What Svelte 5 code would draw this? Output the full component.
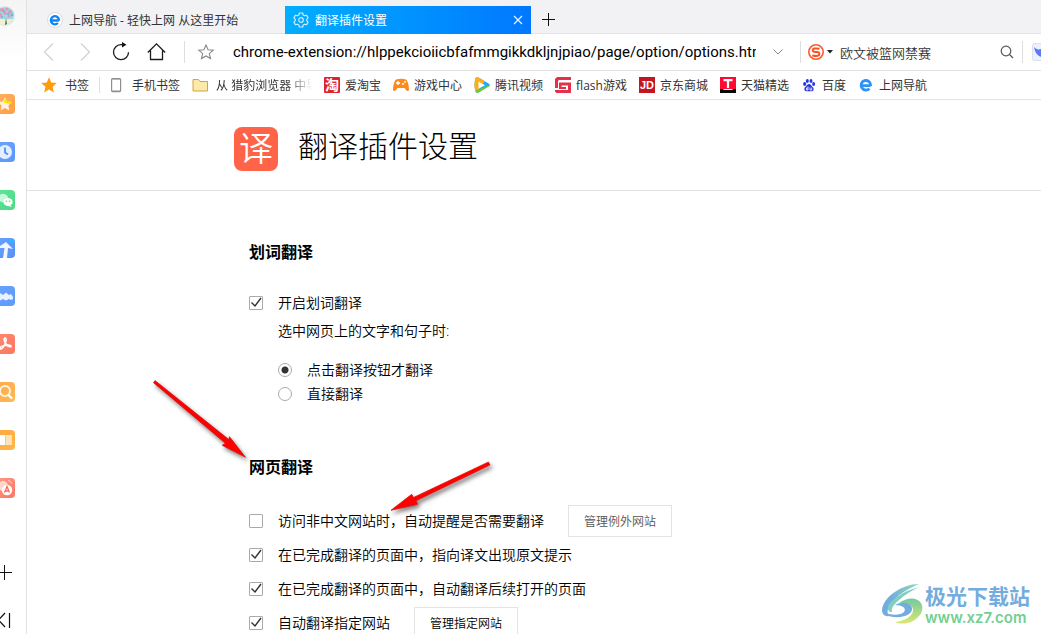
<script>
  const apps = [
    { id: 'favorites', label: '收藏', from: '#ffb066', to: '#ff9e40' },
    { id: 'history', label: '历史', from: '#6ba4ff', to: '#5c98fa' },
    { id: 'wechat', label: '微信', from: '#5ce596', to: '#4cdb86' },
    { id: 'travel', label: '出行', from: '#6aa2ff', to: '#5592f5' },
    { id: 'waves', label: '云盘', from: '#6aa2ff', to: '#5c9afc' },
    { id: 'pdf', label: 'PDF', from: '#ff8770', to: '#fb7763' },
    { id: 'search', label: '搜索', from: '#ffa94f', to: '#ffb94d' },
    { id: 'book', label: '阅读', from: '#ffa640', to: '#ffb748' },
    { id: 'translate', label: '翻译', from: '#ff9a85', to: '#fb7766' }
  ];

  const bookmarks = [
    { icon: 'tao', text: '爱淘宝' },
    { icon: 'game', text: '游戏中心' },
    { icon: 'video', text: '腾讯视频' },
    { icon: 'flash', text: 'flash游戏' },
    { icon: 'jd', text: '京东商城' },
    { icon: 'tmall', text: '天猫精选' },
    { icon: 'baidu', text: '百度' },
    { icon: 'edge', text: '上网导航' }
  ];

  let url = $state('chrome-extension://hlppekcioiicbfafmmgikkdkljnjpiao/page/option/options.html');
  let query = $state('欧文被篮网禁赛');
  let wordTranslate = $state(true);
  let mode = $state('click');

  let pageOptions = $state([
    { text: '访问非中文网站时，自动提醒是否需要翻译', checked: false, button: '管理例外网站', muted: true },
    { text: '在已完成翻译的页面中，指向译文出现原文提示', checked: true },
    { text: '在已完成翻译的页面中，自动翻译后续打开的页面', checked: true },
    { text: '自动翻译指定网站', checked: true, button: '管理指定网站' }
  ]);
</script>

{#snippet edge()}
  <path d="M3.4 8.6h9.2M12.7 9V8.2a4.8 4.8 0 1 0-1.3 3.4" fill="none" stroke="currentColor" stroke-width="2.8" />
{/snippet}

<div class="shell">
  <aside class="side">
    <button class="avatar" aria-label="账号">
      <svg viewBox="0 0 20 20" width="20" height="20">
        <circle cx="10" cy="10" r="10" fill="#dfe9dc" />
        <path d="M1 7a10 10 0 0 1 18 0l-1 6H2z" fill="#9fd6e6" />
        <g fill="#e596b5">
          <circle cx="7" cy="4" r="2" /><circle cx="12" cy="3" r="1.6" /><circle cx="15" cy="6" r="2" />
          <circle cx="10" cy="7" r="1.8" /><circle cx="5" cy="9" r="2" /><circle cx="14" cy="10" r="1.5" />
        </g>
        <g fill="#62b9d4">
          <circle cx="9" cy="5" r="1" /><circle cx="13" cy="8" r="1" /><circle cx="17" cy="9" r="1.2" /><circle cx="7" cy="11" r="1" />
        </g>
        <path d="M2 14c4-2 7 1 15-1a10 10 0 0 1-14 4z" fill="#f3f1cf" />
        <path d="M11 12l1 6-2 1z" fill="#4c6b56" />
      </svg>
    </button>
    <nav class="apps">
      {#each apps as app}
        <button class="app" aria-label={app.label} style="background: linear-gradient(135deg, {app.from}, {app.to})">
          <svg viewBox="0 0 20 20" width="20" height="20">
            {#if app.id === 'favorites'}
              <path d="M10 3l2.1 4.5 4.9.6-3.6 3.4.9 4.9L10 14l-4.3 2.4.9-4.9L3 8.1l4.9-.6z" fill="#fff3df" />
              <path d="M10 3l2.1 4.5 4.9.6-2 1.8-6-1.2z" fill="#ffe100" />
            {:else if app.id === 'history'}
              <circle cx="10" cy="10" r="7" fill="#e3eeff" />
              <path d="M10 5.5v5l3 2" fill="none" stroke="#4f8df5" stroke-width="1.8" />
            {:else if app.id === 'wechat'}
              <ellipse cx="8" cy="8" rx="5" ry="4.2" fill="#c9f7da" />
              <ellipse cx="13" cy="12" rx="4.6" ry="4" fill="#fff" />
              <path d="M15 15l2 2-4-1z" fill="#fff" />
              <circle cx="11.4" cy="11.2" r=".8" fill="#4cdb86" /><circle cx="14.6" cy="11.2" r=".8" fill="#4cdb86" />
            {:else if app.id === 'travel'}
              <path d="M13 3.500l2-2 4 2v1.500z" fill="#00d0ff" />
              <path d="M2 10l9-6 7 7-5-1-1 10H8l1.500-10z" fill="#f1f6ff" />
            {:else if app.id === 'waves'}
              <path d="M2 13V9l3-2 3 2 3-2.500 3 2.500 2-1 2 3v2l-2 1-2-1-3 1.500-3-1.500-3 1.500z" fill="#e9f2ff" />
            {:else if app.id === 'pdf'}
              <path d="M10 4c2 0 1 4-1 8-1.500 3-4 4-4 2s9-4 11-2c1 1.500-3 1-5-2S8.500 4 10 4z" fill="none" stroke="#fff" stroke-width="1.600" />
            {:else if app.id === 'search'}
              <circle cx="10" cy="9" r="5" fill="none" stroke="#fff4e2" stroke-width="2" />
              <path d="M13.500 13l3 3" stroke="#fff" stroke-width="2.200" stroke-linecap="round" />
            {:else if app.id === 'book'}
              <path d="M3 5h7v10H3z" fill="#fff" /><path d="M10.500 5H17v10h-6.500z" fill="#ffe2b8" />
            {:else}
              <circle cx="8" cy="8" r="5" fill="#ffd6cc" />
              <circle cx="12" cy="12" r="5.200" fill="#fff" />
              <path d="M9.500 14.500l2.500-6 2.500 6M10.300 13h3.400" fill="none" stroke="#fb6c58" stroke-width="1.300" />
              <path d="M13 2.500q3 .5 4 3M2 14q.5 3 3 4" fill="none" stroke="#ffd6cc" />
            {/if}
          </svg>
        </button>
      {/each}
    </nav>
    <button class="tool" aria-label="添加">
      <svg viewBox="0 0 16 16" width="16" height="16"><path d="M8.500 1v15M1 8.500h15" stroke="#111" fill="none" /></svg>
    </button>
    <button class="tool" aria-label="收起">
      <svg viewBox="0 0 16 16" width="16" height="16"><path d="M9 1L2.500 8 9 15M13.500 1v15" stroke="#111" stroke-width="1.200" fill="none" /></svg>
    </button>
  </aside>

  <div class="window">
    <div class="tabs">
      <div class="tab">
        <svg class="disc" viewBox="0 0 16 16" width="16" height="16">
          <circle cx="8" cy="8" r="7.500" fill="#fff" stroke="#d8dbe0" />
          <g color="#0f86f5" transform="translate(1.200 1.200) scale(.85)">{@render edge()}</g>
        </svg>
        <span>上网导航 - 轻快上网 从这里开始</span>
      </div>
      <div class="tab active">
        <svg viewBox="0 0 16 16" width="16" height="16" fill="none" stroke="#cfeaff" stroke-width="1.200" stroke-linejoin="round">
          <path d="M6.300 1h3.400l.5 2 1.400.8 2-.6 1.500 2.700L13.700 7.300v1.400l1.400 1.400-1.500 2.700-2-.6-1.400.8-.5 2H6.300l-.5-2-1.400-.8-2 .6L.9 10.100l1.400-1.400V7.300L.9 5.900l1.500-2.700 2 .6L5.800 3z" />
          <circle cx="8" cy="8" r="2.300" />
        </svg>
        <span class="grow">翻译插件设置</span>
        <button class="close" aria-label="关闭标签页">
          <svg viewBox="0 0 10 10" width="10" height="10"><path d="M1 1l8 8M9 1L1 9" stroke="#e6f4ff" stroke-width="1.200" /></svg>
        </button>
      </div>
      <button class="newtab" aria-label="新标签页">
        <svg viewBox="0 0 14 14" width="14" height="14"><path d="M6.500 0v13M0 6.500h13" stroke="#111" /></svg>
      </button>
    </div>

    <div class="toolbar">
      <button class="nav" aria-label="后退"><svg viewBox="0 0 20 20" width="20" height="20"><path d="M14 1.500L5.500 10l8.500 8.500" fill="none" stroke="#d0d0d0" stroke-width="1.200" /></svg></button>
      <button class="nav" aria-label="前进"><svg viewBox="0 0 20 20" width="20" height="20"><path d="M6 1.500l8.500 8.500L6 18.500" fill="none" stroke="#d0d0d0" stroke-width="1.200" /></svg></button>
      <button class="nav" aria-label="刷新"><svg viewBox="0 0 20 20" width="20" height="20"><path d="M12 2.700H9.800a7.500 7.500 0 1 0 7.700 7.500" fill="none" stroke="#1c1c1c" stroke-width="1.300" /><path d="M11 0l4.500 2.700L11 5.400z" fill="#111" /></svg></button>
      <button class="nav" aria-label="主页"><svg viewBox="0 0 20 20" width="20" height="20"><path d="M.8 10.500L9.500 1.800l8.700 8.700M3.500 8.500v9h12v-9" fill="none" stroke="#1c1c1c" stroke-width="1.300" /></svg></button>
      <i class="bar first"></i>
      <button class="fav" aria-label="收藏"><svg viewBox="0 0 20 20" width="20" height="20"><path d="M10 3l2.100 4.700 5.100.5-3.900 3.400 1.200 5L10 14l-4.500 2.600 1.200-5-3.900-3.400 5.100-.5z" fill="none" stroke="#8a8a8a" stroke-width="1.100" /></svg></button>
      <input class="url" aria-label="地址" bind:value={url} />
      <button class="drop" aria-label="展开地址"><svg viewBox="0 0 12 12" width="12" height="12"><path d="M1.500 3.500L6 8l4.500-4.500" fill="none" stroke="#888" /></svg></button>
      <i class="bar"></i>
      <div class="search">
        <button class="engine" aria-label="搜索引擎">
          <svg viewBox="0 0 16 16" width="16" height="16">
            <circle cx="8" cy="8" r="7.200" fill="#fff" stroke="#fb5a2c" stroke-width="1.600" />
            <path d="M11.500 4.800Q4.800 3.600 4.800 6t3.400 2 3.200 2.200T4.300 11.400" fill="none" stroke="#fb5022" stroke-width="2" />
          </svg>
          <svg viewBox="0 0 6 4" width="6" height="4"><path d="M0 0h6L3 3.500z" fill="#222" /></svg>
        </button>
        <input class="query" aria-label="搜索" bind:value={query} />
        <button class="go" aria-label="开始搜索"><svg viewBox="0 0 14 14" width="14" height="14"><circle cx="6" cy="6" r="4.800" fill="none" stroke="#555" stroke-width="1.200" /><path d="M9.500 9.500L13 13" stroke="#555" stroke-width="1.200" /></svg></button>
      </div>
      <i class="bar"></i>
      <button class="ext" aria-label="扩展"><svg viewBox="0 0 18 18" width="18" height="18"><rect x=".5" y=".5" width="17" height="17" rx="2" fill="#eef0fd" stroke="#dcdff3" /><path d="M2 4c2 2 4 3 7 2l7 1-5 7c-5 0-8-4-9-10z" fill="#5a7bf0" /></svg></button>
    </div>

    <div class="bookmarks">
      <a class="mark wide" href="#bookmarks">
        <svg viewBox="0 0 16 16" width="16" height="16"><path d="M8 .3l2.200 5.200 5.600.5-4.200 3.800 1.200 5.600L8 12.500l-4.800 2.900 1.200-5.600L.2 6l5.600-.5z" fill="#ff9c0a" /></svg>书签
      </a>
      <i class="bar short"></i>
      <a class="mark wide" href="#mobile">
        <svg viewBox="0 0 16 16" width="16" height="16"><rect x="3.600" y="1.600" width="9" height="13" rx="1" fill="#fff" stroke="#8f8f8f" stroke-width="1.200" /><path d="M4 2h8M4 14h8" stroke="#8f8f8f" /></svg>手机书签
      </a>
      <a class="mark wide folder" href="#imported">
        <svg viewBox="0 0 16 16" width="16" height="16"><path d="M1 2.500h5.500L8 4.500h7.500v9.500H1z" fill="#ffe9a8" stroke="#cfa546" /></svg><span class="fade">从 猎豹浏览器 中导</span>
      </a>
      {#each bookmarks as mark}
        <a class="mark" href="#{mark.icon}">
          <svg viewBox="0 0 16 16" width="16" height="16">
            {#if mark.icon === 'tao'}
              <rect width="16" height="16" rx="1" fill="#dd2230" />
              <text class="zh" x="8" y="13" font-size="14" text-anchor="middle">淘</text>
            {:else if mark.icon === 'game'}
              <path d="M3 2.500Q8 .8 13 2.500c2 1.500 3 7 3 10-.3 2-2 2-3 .5L11.500 11h-7L3 13c-1 1.500-2.700 1.500-3-.5 0-3 1-8.500 3-10z" fill="#ff8a1c" />
              <path d="M5 4v4M3 6h4" stroke="#fff" stroke-width="1.300" /><circle cx="10" cy="7" r="1" fill="#fff" /><circle cx="12" cy="5" r="1" fill="#fff" />
            {:else if mark.icon === 'video'}
              <path d="M1.500 1Q3-.3 5 .7l10 6q1.500 1.300 0 2.600l-10 6q-2 1-3.300-.2Q-.5 8 1.500 1z" fill="#1eaaf5" />
              <path d="M1.500 1Q3-.3 5 .7l6 3.600L4 13 1.200 14Q-.5 8 1.500 1z" fill="#ffad18" />
              <path d="M2.500 13.500L15.500 8q0 .8-.5 1.300l-10 6q-2 1-3.300-.2z" fill="#79c91c" />
              <path d="M4.500 4.500l6.500 3.700-6.500 3.600z" fill="#fff" />
            {:else if mark.icon === 'flash'}
              <path d="M2 0h14v3H4L3 4v7H0V2zM4 5.500h12V16H1.500L0 14.500V13h13V8.500H6.500v1.500H11v2H4z" fill="#e5304c" />
            {:else if mark.icon === 'jd'}
              <rect width="16" height="16" fill="#c5161f" />
              <text class="latin" x="8" y="12" font-size="11" text-anchor="middle">JD</text>
            {:else if mark.icon === 'tmall'}
              <path d="M0 0h16v12H0z" fill="#ff0a35" /><path d="M0 12h3l1 1h8l1-1h3v4H0z" fill="#080808" />
              <path d="M3.500 3.200h9M8 3v8" stroke="#fff" stroke-width="2.200" />
            {:else if mark.icon === 'baidu'}
              <g fill="#2b37dc">
                <ellipse cx="3.700" cy="7" rx="1.600" ry="2" /><ellipse cx="6.300" cy="3.900" rx="1.500" ry="2" />
                <ellipse cx="10" cy="3.900" rx="1.500" ry="2" /><ellipse cx="12.600" cy="7" rx="1.500" ry="2" />
                <path d="M8 7c1.600 0 2.300 1.800 3.700 3 1.600 1.400 1.200 4-.9 4.200-1.900.2-3.700.2-5.600 0-2-.2-2.500-2.800-.9-4.200C5.700 8.800 6.400 7 8 7z" />
              </g>
              <path d="M7 9.500v3.500H5.500v-2H7M9 10.500V13h1.700v-2.500" fill="none" stroke="#fff" stroke-width=".8" />
            {:else}
              <g color="#2f92f7">{@render edge()}</g>
            {/if}
          </svg>{mark.text}
        </a>
      {/each}
    </div>

    <main class="page">
      <header class="head">
        <div class="inner">
          <span class="logo" aria-hidden="true">译</span>
          <h1>翻译插件设置</h1>
        </div>
      </header>

      <div class="content">
        <section>
          <h2>划词翻译</h2>
          <label class="option line"><input type="checkbox" bind:checked={wordTranslate} />开启划词翻译</label>
          <div class="nested">
            <p id="mode-label">选中网页上的文字和句子时:</p>
            <div class="modes" role="radiogroup" aria-labelledby="mode-label">
              <label class="option"><input type="radio" name="mode" value="click" bind:group={mode} />点击翻译按钮才翻译</label>
              <label class="option"><input type="radio" name="mode" value="direct" bind:group={mode} />直接翻译</label>
            </div>
          </div>
        </section>

        <section>
          <h2>网页翻译</h2>
          {#each pageOptions as option}
            <div class="row">
              <label class="option"><input type="checkbox" bind:checked={option.checked} />{option.text}</label>
              {#if option.button}
                <button class="manage" class:muted={option.muted}>{option.button}</button>
              {/if}
            </div>
          {/each}
        </section>
      </div>
    </main>
  </div>

  <svg class="arrows" viewBox="0 0 345 140" width="345" height="140" aria-hidden="true">
    <g fill="#f00" stroke="#e01010" stroke-width=".8">
      <path d="M3.500 2.700L5 .6 78.800 59.600 79.500 56.700 95.500 77.300 72.300 65.300 75.500 63.300z" />
      <path d="M338.500 82L339.900 85 266 120.800 267.500 124.300 241 130.300 261.700 114.300 263.500 117.500z" />
    </g>
  </svg>

  <div class="watermark">
    <svg viewBox="0 0 42 42" width="42" height="42">
      <defs>
        <linearGradient id="aurora" x1="0" y1="0" x2="0" y2="1"><stop offset="0" stop-color="#72c9a4" /><stop offset="1" stop-color="#d9e86e" /></linearGradient>
        <linearGradient id="sweep" x1="1" y1="0" x2="0" y2="1"><stop offset="0" stop-color="#8fd8b8" /><stop offset=".6" stop-color="#74acde" /></linearGradient>
      </defs>
      <path d="M37 1C20 1 1 14 0 27c0 4 3 7 7 6-3-4-1-10 5-16C18 10 28 5 37 1z" fill="url(#sweep)" />
      <path d="M38 4C24 7 8 16 6 24c-.5 3 1 5 4 5-1-3 1-7 6-11 6-6 14-11 22-14z" fill="#7fcfc0" />
      <path d="M17 20c8-6 18-6 22 0 4 7-1 15-10 19-6 2-12 2-16 0 9-1 17-5 18-11 1-5-5-8-14-8z" fill="url(#aurora)" />
      <path d="M13 22c7-4 16-2 17 3s-6 10-18 9c-5-.5-9-2-10-5 5 3 16 4 20 0 3-4-2-7-9-7z" fill="#74acde" />
    </svg>
    <div>
      <b>极光下载站</b>
      <span>www.xz7.com</span>
    </div>
  </div>
</div>

<style>
  :global(body) {
    margin: 0;
    background: #fff;
  }

  .shell {
    position: relative;
    display: flex;
    height: 100vh;
    overflow: hidden;
    color: #000;
    font-family: 'Open Sans', 'Noto Sans CJK SC', sans-serif;
    font-size: 14px;
    font-weight: 350;
  }

  .shell :is(button, input) {
    margin: 0;
    padding: 0;
    border: 0;
    background: none;
    color: inherit;
    font-family: inherit;
    font-weight: inherit;
  }

  svg {
    display: block;
    flex: none;
  }

  /* Side strip */
  .side {
    display: flex;
    flex: none;
    flex-direction: column;
    width: 26px;
    border-right: 1px solid #e2e2e2;
    background: linear-gradient(#f4f4f5, #fff 60px);
    overflow: hidden;
  }

  .avatar,
  .app {
    flex: none;
    width: 20px;
    height: 20px;
    margin-left: -5px !important;
  }

  .avatar {
    margin-top: 6px !important;
  }

  .apps {
    display: flex;
    flex-direction: column;
    gap: 28px;
    margin: 68px 0 50px;
  }

  .app {
    border-radius: 4px;
  }

  .tool {
    flex: none;
    align-self: flex-start;
    height: 48px;
    margin-left: -4px !important;
  }

  /* Browser chrome */
  .window {
    display: flex;
    flex: 1;
    flex-direction: column;
    min-width: 0;
  }

  .tabs {
    display: flex;
    flex: none;
    align-items: flex-end;
    height: 34px;
    padding-left: 12px;
    box-shadow: inset 0 -1px #e2e2e2;
    background: #f2f2f4;
    color: #333;
    font-size: 12px;
    font-weight: 400;
  }

  .tab {
    display: flex;
    align-items: center;
    gap: 6px;
    box-sizing: border-box;
    width: 246px;
    height: 28px;
    padding: 0 8px;
    white-space: nowrap;
  }

  .tab.active {
    background: linear-gradient(90deg, #00aeff, #0078ff);
    color: #fff;
  }

  .grow {
    flex: 1;
  }

  .newtab {
    display: flex;
    align-items: center;
    height: 28px;
    padding-left: 11px !important;
  }

  .toolbar {
    display: flex;
    flex: none;
    align-items: center;
    height: 36px;
    padding-left: 4px;
    border-bottom: 1px solid #e2e2e2;
    overflow: hidden;
  }

  .nav {
    display: flex;
    flex: none;
    justify-content: center;
    width: 36px;
  }

  .bar {
    flex: none;
    width: 1px;
    height: 22px;
    background: #dedede;
  }

  .bar.first {
    margin: 0 11px 0 9px;
  }

  .bar.short {
    height: 16px;
    margin: 0 8px 0 10px;
  }

  .shell .url {
    flex: 1;
    min-width: 0;
    margin-left: 17px;
    font-family: Roboto, sans-serif;
    font-size: 15px;
    font-weight: 400;
    line-height: 24px;
    outline: 0;
  }

  .drop {
    margin: 0 16px !important;
  }

  .search {
    display: flex;
    flex: none;
    align-items: center;
    width: 221px;
  }

  .engine {
    display: flex;
    align-items: center;
    gap: 3px;
    padding: 0 7px !important;
  }

  .query {
    flex: 1;
    min-width: 0;
    color: #333 !important;
    font-size: 13px;
    outline: 0;
  }

  .go {
    margin-right: 8px !important;
  }

  .ext {
    flex: none;
    width: 9px;
    margin-left: 9px !important;
    overflow: hidden;
  }

  .bookmarks {
    display: flex;
    flex: none;
    align-items: center;
    height: 28px;
    padding-left: 14px;
    border-bottom: 1px solid #e2e2e2;
    overflow: hidden;
  }

  .mark {
    display: flex;
    flex: none;
    align-items: center;
    gap: 5px;
    margin-right: 12px;
    color: #333;
    font-size: 12px;
    font-weight: 400;
    line-height: 19px;
    text-decoration: none;
    white-space: nowrap;
  }

  .mark.wide {
    gap: 8px;
  }

  .mark:first-child {
    margin-right: 0;
  }

  .fade {
    width: 96px;
    overflow: hidden;
    mask-image: linear-gradient(90deg, #000 70px, transparent 96px);
  }

  .zh,
  .latin {
    fill: #fff;
    font-weight: 700;
  }

  .latin {
    font-family: 'Liberation Sans', sans-serif;
  }

  /* Options page */
  .page {
    flex: 1;
    min-height: 0;
    overflow: hidden;
  }

  .head {
    border-bottom: 1px solid #e2e2e2;
  }

  .inner,
  .content {
    max-width: 600px;
    margin: 0 auto;
  }

  .inner {
    display: flex;
    gap: 20px;
    padding: 27px 0 19px;
  }

  .logo {
    flex: none;
    width: 44px;
    height: 44px;
    border-radius: 8px;
    background: #ff6348;
    color: #fff;
    font-size: 34px;
    font-weight: 350;
    line-height: 42px;
    text-align: center;
  }

  h1 {
    margin: 0;
    font-size: 30px;
    font-weight: 300;
    line-height: 38px;
  }

  section {
    padding: 49px 0 0 15px;
  }

  h2 {
    margin: 0 0 25px;
    font-size: 16px;
    font-weight: 700;
    line-height: 24px;
  }

  .option {
    display: flex;
    align-items: center;
    gap: 15px;
    line-height: 24px;
    white-space: nowrap;
  }

  .option.line,
  p {
    margin: 0;
    line-height: 28px;
  }

  .nested {
    padding-left: 29px;
  }

  .modes {
    margin-top: 13px;
  }

  .option input {
    flex: none;
    box-sizing: border-box;
    width: 14px;
    height: 14px;
    border-radius: 1px;
    background: #fff;
    appearance: none;
  }

  .option input[type='checkbox']:checked {
    background: url("data:image/svg+xml,%3Csvg xmlns='http://www.w3.org/2000/svg' viewBox='0 0 12 12'%3E%3Cpath d='M1.500 5.500l3.500 3.500L11 1' fill='none' stroke='%23333' stroke-width='1.400'/%3E%3C/svg%3E") center / 12px 12px;
  }

  .shell .option input {
    border: 1px solid #aaa;
  }

  .option input[type='radio'] {
    border-radius: 50%;
  }

  .option input[type='radio']:checked {
    background: radial-gradient(circle, #333 3px, #fff 4px);
  }

  .row {
    display: flex;
    align-items: center;
    gap: 24px;
    height: 34px;
  }

  .shell .manage {
    width: 104px;
    height: 32px;
    border: 1px solid #e4e4e4;
    background: #fff;
    font-size: 12px;
  }

  .shell .manage.muted {
    color: #555;
  }

  /* Annotations over the page */
  .arrows {
    position: absolute;
    top: 380px;
    left: 150px;
    filter: drop-shadow(2px 3px 2px rgb(0 0 0 / 50%));
    pointer-events: none;
  }

  .watermark {
    position: absolute;
    right: 11px;
    bottom: 7px;
    display: flex;
    gap: 1px;
    pointer-events: none;
  }

  .watermark b,
  .watermark span {
    display: block;
  }

  .watermark b {
    color: #74acde;
    font-size: 21px;
    line-height: 26px;
  }

  .watermark span {
    color: #72cf90;
    font-family: Inter, sans-serif;
    font-size: 15px;
    font-weight: 600;
    line-height: 18px;
  }
</style>
